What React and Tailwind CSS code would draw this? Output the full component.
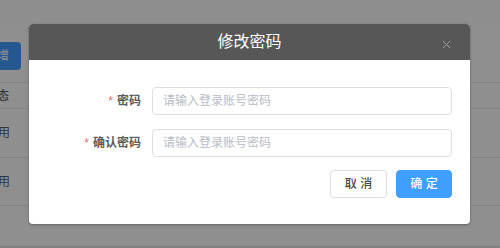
import React from 'react';

const font = { fontFamily: '"Liberation Sans", "Noto Sans CJK SC", sans-serif' };

const FormRow = ({ label, placeholder }) => (
  <div className="flex items-center h-[28px]">
    <label className="w-[100px] pr-[11px] flex justify-end items-center text-[12px] font-semibold text-[#5a5c60]">
      <span className="text-[#f56c6c] mr-[4px] text-[12px] font-normal">*</span>
      {label}
    </label>
    <input
      type="password"
      placeholder={placeholder}
      className="flex-1 h-[28px] border border-[#dcdfe6] rounded-[4px] px-[10px] text-[12px] text-[#606266] placeholder:text-[#b8bcc4] outline-none"
    />
  </div>
);

export default function App() {
  return (
    <div className="relative w-[500px] h-[248px] overflow-hidden bg-white" style={font}>
      {/* page behind the dialog */}
      <div className="flex flex-col w-full h-full">
        <div className="h-[24px] bg-[#fdfdfd]" />
        <div className="h-[59px] pt-[18px] border-b border-[#ebeef5]">
          <div className="-ml-[35px] w-[56px] h-[28px] rounded-[4px] bg-[#409eff] text-white text-[12px] flex items-center justify-end pr-[12px]">
            新增
          </div>
        </div>
        <div className="h-[26px] pt-[1px] flex items-center border-b border-[#ebeef5] text-[12px] text-[#606266] font-medium">
          <span className="-ml-[15px]">状态</span>
        </div>
        <div className="h-[49px] flex items-center border-b border-[#ebeef5] text-[12px] text-[#606266]">
          <span className="-ml-[14px]">启用</span>
        </div>
        <div className="h-[48px] flex items-center border-b border-[#ebeef5] text-[12px] text-[#606266]">
          <span className="-ml-[14px]">启用</span>
        </div>
        <div className="flex-1 border-b-[2px] border-[#e4e7ed]" />
      </div>

      {/* overlay */}
      <div className="absolute inset-0 bg-black/[0.44]" />

      {/* dialog */}
      <div className="absolute left-[29px] top-[24px] w-[441px] rounded-[4px] bg-white shadow-[0_1px_3px_rgba(0,0,0,0.3)] overflow-hidden">
        <div className="relative h-[36px] bg-[#575757] flex items-center justify-center">
          <span className="text-white text-[16px] leading-none">修改密码</span>
          <button className="absolute right-[19px] top-[16px] w-[9px] h-[9px]">
            <svg viewBox="0 0 10 10" width="9" height="9" stroke="#a0a0a0" strokeWidth="1.1">
              <path d="M1 1L9 9M9 1L1 9" />
            </svg>
          </button>
        </div>
        <div className="pt-[27px] pl-[23px] pr-[18px] pb-[26px]">
          <div className="flex flex-col gap-[14px]">
            <FormRow label="密码" placeholder="请输入登录账号密码" />
            <FormRow label="确认密码" placeholder="请输入登录账号密码" />
          </div>
          <div className="mt-[13px] flex justify-end gap-[9px]">
            <button className="w-[57px] h-[28px] rounded-[4px] border border-[#dcdfe6] bg-white text-[12px] font-medium text-[#4a4a4a]">
              取 消
            </button>
            <button className="w-[56px] h-[28px] rounded-[4px] border border-[#409eff] bg-[#409eff] text-[12px] font-medium text-white">
              确 定
            </button>
          </div>
        </div>
      </div>
    </div>
  );
}
